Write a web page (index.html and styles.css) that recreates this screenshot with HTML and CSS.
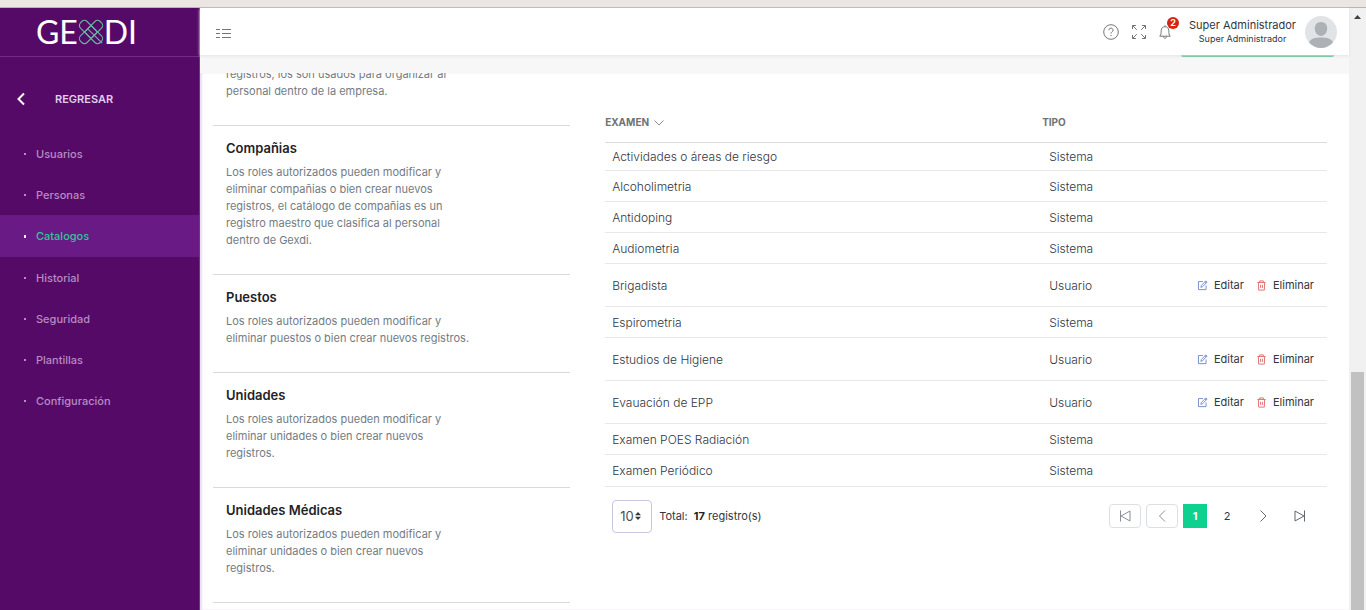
FILE: index.html
```html
<!DOCTYPE html>
<html lang="es">
<head>
<meta charset="utf-8">
<title>Gexdi - Catalogos</title>
<link rel="stylesheet" href="styles.css">
</head>
<body>
<svg width="0" height="0" class="defs" aria-hidden="true">
  <symbol id="i-edit" viewBox="0 0 12 12"><path d="M6.5 1.7H1.6v8.8h8.3V6M4.2 8l.5-2L9.6 1l1.4 1.3L6.1 7.3z M8.7 2l1.3 1.3"/></symbol>
  <symbol id="i-trash" viewBox="0 0 12 12"><path d="M1.5 2.7h9M4 2.5V1h4v1.5M2.6 2.9l.3 8.1h6.2l.3-8.1M5 5.2v3.4M7 5.2v3.4"/></symbol>
</svg>
<div class="strip"></div>
<div class="app">
  <aside class="sidebar">
    <div class="brand">
      <span>GE</span>
      <svg class="brand-x" viewBox="0 0 28 28" aria-hidden="true">
        <g transform="rotate(45 14 14)"><rect x="-1" y="9" width="30" height="10" rx="4"/></g>
        <g transform="rotate(-45 14 14)"><rect x="-1" y="9" width="30" height="10" rx="4"/></g>
        <path d="M10 10l16 16M14 7l7 7-7 7-7-7z"/>
      </svg>
      <span>DI</span>
    </div>
    <a class="back" href="#">
      <svg viewBox="0 0 10 14" aria-hidden="true"><path d="M8 1.500L2.500 7 8 12.500"/></svg>
      <span>REGRESAR</span>
    </a>
    <nav class="menu">
      <a href="#">Usuarios</a>
      <a href="#">Personas</a>
      <a href="#" class="active">Catalogos</a>
      <a href="#">Historial</a>
      <a href="#">Seguridad</a>
      <a href="#">Plantillas</a>
      <a href="#">Configuración</a>
    </nav>
  </aside>
  <main class="main">
    <header class="topbar">
      <button class="icon-btn toggle" aria-label="Menú"><svg width="15" height="11" viewBox="0 0 15 11"><path d="M0 1.500h4M6 1.500h9M0 5.500h4M6 5.500h9M0 9.500h4M6 9.500h9"/></svg></button>
      <div class="tools">
        <button class="icon-btn" aria-label="Ayuda"><svg width="16" height="16" viewBox="0 0 16 16"><circle cx="8" cy="8" r="7.300"/><path d="M5.900 6.200c0-2.800 4.200-2.700 4.200-.1 0 1.600-2.100 1.600-2.100 3.500M8 11v1.200"/></svg></button>
        <button class="icon-btn" aria-label="Pantalla completa"><svg width="14" height="14" viewBox="0 0 14 14"><path d="M.5 4V.5H4M.5.5l4.300 4.300M10 .5h3.500V4M13.500.5L9.200 4.800M.5 10v3.500H4M.5 13.500l4.300-4.300M13.500 10v3.500H10M13.500 13.500L9.200 9.200"/></svg></button>
        <button class="icon-btn bell" aria-label="Notificaciones"><svg width="12" height="14" viewBox="0 0 12 14"><path d="M6 .3v1.200M.7 11.200h10.600C9.800 9.800 9.900 8.500 9.800 5.500 9.700 3 8.200 1.700 6 1.700S2.300 3 2.200 5.500C2.100 8.500 2.200 9.800.7 11.200zM4.500 11.500c0 2.400 3 2.400 3 0"/></svg><span class="badge">2</span></button>
        <div class="user"><div class="user-name">Super Administrador</div><div class="user-role">Super Administrador</div></div>
        <svg class="avatar" viewBox="0 0 32 32" role="img" aria-label="Avatar"><circle cx="16" cy="16" r="16" fill="#e1e4e6"/><path d="M16 6c-4 0-6.200 2.800-6.200 6.500S12.500 20 16 20s6.200-3.800 6.200-7.500S20 6 16 6zM4 26.500C5.500 22.500 10 21.500 16 21.500s10.500 1 12 5C25 30 20.500 32 16 32S7 30 4 26.500z" fill="#acb1b6"/></svg>
      </div>
    </header>
    <div class="band"><div class="band-line"></div></div>
    <div class="content">
      <div class="catalogs">
        <section class="catalog"><p>registros, los son usados para organizar al personal dentro de la empresa.</p></section>
        <section class="catalog"><h2>Compañias</h2><p>Los roles autorizados pueden modificar y eliminar compañias o bien crear nuevos registros, el catálogo de compañias es un registro maestro que clasifica al personal dentro de Gexdi.</p></section>
        <section class="catalog"><h2>Puestos</h2><p>Los roles autorizados pueden modificar y eliminar puestos o bien crear nuevos registros.</p></section>
        <section class="catalog"><h2>Unidades</h2><p>Los roles autorizados pueden modificar y eliminar unidades o bien crear nuevos registros.</p></section>
        <section class="catalog"><h2>Unidades Médicas</h2><p>Los roles autorizados pueden modificar y eliminar unidades o bien crear nuevos registros.</p></section>
        <section class="catalog"></section>
      </div>
      <div class="exams">
        <table>
          <colgroup><col class="c-exam"><col class="c-type"><col></colgroup>
          <thead><tr><th>EXAMEN <svg width="10" height="6" viewBox="0 0 10 6" aria-hidden="true"><path d="M.5.5L5 5 9.500.5"/></svg></th><th>TIPO</th><th></th></tr></thead>
          <tbody>
            <tr><td>Actividades o áreas de riesgo</td><td>Sistema</td><td></td></tr>
            <tr><td>Alcoholimetria</td><td>Sistema</td><td></td></tr>
            <tr><td>Antidoping</td><td>Sistema</td><td></td></tr>
            <tr><td>Audiometria</td><td>Sistema</td><td></td></tr>
            <tr class="own"><td>Brigadista</td><td>Usuario</td><td><div class="actions"><button><svg class="edit"><use href="#i-edit"/></svg>Editar</button><button><svg class="trash"><use href="#i-trash"/></svg>Eliminar</button></div></td></tr>
            <tr><td>Espirometria</td><td>Sistema</td><td></td></tr>
            <tr class="own"><td>Estudios de Higiene</td><td>Usuario</td><td><div class="actions"><button><svg class="edit"><use href="#i-edit"/></svg>Editar</button><button><svg class="trash"><use href="#i-trash"/></svg>Eliminar</button></div></td></tr>
            <tr class="own"><td>Evauación de EPP</td><td>Usuario</td><td><div class="actions"><button><svg class="edit"><use href="#i-edit"/></svg>Editar</button><button><svg class="trash"><use href="#i-trash"/></svg>Eliminar</button></div></td></tr>
            <tr><td>Examen POES Radiación</td><td>Sistema</td><td></td></tr>
            <tr><td>Examen Periódico</td><td>Sistema</td><td></td></tr>
          </tbody>
        </table>
        <div class="footer">
          <div class="page-size">
            <select aria-label="Registros por página"><option>10</option></select>
            <svg width="6" height="8" viewBox="0 0 6 8" aria-hidden="true"><path d="M3 0l3 3.300H0zM3 8L0 4.700h6z"/></svg>
          </div>
          <div class="total">Total: &nbsp;<strong>17</strong> registro(s)</div>
          <nav class="pager" aria-label="Paginación">
            <button class="boxed" aria-label="Primera"><svg width="12" height="12" viewBox="0 0 12 12"><path d="M1.500.5v11M11 1v10L2 6z"/></svg></button>
            <button class="boxed" aria-label="Anterior"><svg width="12" height="12" viewBox="0 0 12 12"><path d="M9 .5L3.500 6 9 11.500"/></svg></button>
            <button class="current">1</button>
            <button class="page">2</button>
            <button aria-label="Siguiente"><svg width="12" height="12" viewBox="0 0 12 12"><path d="M3.500.5L9 6l-5.500 5.500"/></svg></button>
            <button aria-label="Última"><svg width="12" height="12" viewBox="0 0 12 12"><path d="M10.500.5v11M1 1v10l9-5z"/></svg></button>
          </nav>
        </div>
      </div>
    </div>
  </main>
  <div class="scrollbar"><svg width="7" height="4" viewBox="0 0 7 4" aria-hidden="true"><path d="M3.500 0L7 4H0z"/></svg><div class="thumb"></div></div>
</div>
</body>
</html>
```
FILE: styles.css
```css
* { box-sizing: border-box; }
body {
  margin: 0;
  height: 100vh;
  display: flex;
  flex-direction: column;
  overflow: hidden;
  font-family: Inter, "Liberation Sans", sans-serif;
  font-size: 12px;
  color: #32363e;
  background: #fff;
}
button {
  font: inherit;
  color: inherit;
  border: 0;
  padding: 0;
  background: none;
  display: flex;
  align-items: center;
  justify-content: center;
}
a { text-decoration: none; }
svg { fill: none; flex-shrink: 0; }
.defs { position: absolute; }

.strip { flex: 0 0 8px; background: #ebe6e2; border-bottom: 1px solid #b9b6b4; }
.app { flex: 1; min-height: 0; display: flex; }

.sidebar { flex: 0 0 200px; background: #560a67; border-right: 1px solid #75338a; }
.brand {
  height: 49px;
  display: flex;
  align-items: center;
  justify-content: center;
  padding-right: 26px;
  border-bottom: 1px solid #74298a;
  font-family: Lato, sans-serif;
  font-size: 32px;
  line-height: 48px;
  color: #fff;
}
.brand-x { width: 26px; height: 26px; stroke: #63b8a0; stroke-width: 1.2; }
.back {
  height: 40px;
  margin: 22px 0 14px;
  padding-left: 16px;
  display: flex;
  align-items: center;
  gap: 29px;
  color: #e3cdea;
  font-size: 11px;
  font-weight: 600;
}
.back svg { width: 10px; height: 14px; stroke: #fff; stroke-width: 2; }
.menu a {
  height: 41px;
  padding-left: 24px;
  display: flex;
  align-items: center;
  gap: 10px;
  font-size: 11px;
  font-weight: 500;
  color: #b78bc4;
}
.menu a::before { content: ""; width: 2px; height: 2px; background: #b78bc4; }
.menu .active { height: 42px; background: #6a1a84; color: #32c39a; }
.menu .active::before { background: #fff; height: 3px; }

.main { flex: 1; min-width: 0; display: flex; flex-direction: column; }
.topbar {
  flex: 0 0 47px;
  padding: 0 12px 0 16px;
  display: flex;
  align-items: center;
  justify-content: space-between;
  background: #fff;
  box-shadow: 0 1px 3px #e2e0e6;
  z-index: 1;
}
.icon-btn svg { stroke: #737579; }
.toggle { padding-top: 4px; }
.tools { display: flex; align-items: center; gap: 13px; }
.bell { position: relative; }
.badge {
  position: absolute;
  left: 8px;
  top: -8px;
  width: 12px;
  height: 12px;
  border-radius: 6px;
  background: #d9230f;
  color: #fff;
  font-size: 9px;
  font-weight: 700;
  line-height: 12px;
  text-align: center;
}
.user { margin-left: 5px; text-align: center; color: #32363e; }
.user-name { font-size: 11px; line-height: 14px; }
.user-role { font-size: 9px; line-height: 13px; }
.avatar { width: 32px; height: 32px; margin-left: -4px; }
.band { flex: 0 0 18px; padding: 0 15px; background: #f7f7f7; }
.band-line { width: 153px; height: 2px; margin-left: auto; background: #45b87a; border-radius: 0 0 2px 2px; }

.content {
  flex: 1;
  min-height: 0;
  overflow: hidden;
  padding: 0 22px 0 13px;
  display: grid;
  grid-template-columns: 331fr 669fr;
  column-gap: 35px;
  box-shadow: inset 2px 0 2px #eadff0;
}
.catalogs { margin-top: -7px; }
.catalog { padding: 0 13px 25px; }
.catalog + .catalog { padding-top: 12px; border-top: 1px solid #d9d9d9; }
.catalog h2 { margin: 0 0 6px; font-size: 13px; line-height: 20px; font-weight: 600; color: #1f2226; }
.catalog p { margin: 0; max-width: 246px; font-size: 11px; line-height: 17px; color: #747b83; }

.exams { padding-top: 30px; }
table { width: 100%; table-layout: fixed; border-collapse: collapse; }
.c-exam { width: 437px; }
.c-type { width: 120px; }
th {
  height: 39px;
  padding: 0;
  text-align: left;
  font-size: 10px;
  font-weight: 700;
  color: #6f7276;
  border-bottom: 1px solid #dcdcdc;
}
th svg { stroke: #8a8d92; margin-left: 3px; }
td { height: 31px; padding: 1px 7px 0; border-bottom: 1px solid #e8e8e8; font-weight: 300; }
tr:first-child td { height: 28px; padding-top: 0; }
tr:last-child td { height: 32px; }
tr.own td { height: 43px; }
.actions { display: flex; justify-content: flex-end; gap: 12px; padding-right: 6px; font-size: 11px; font-weight: 400; }
.actions button { gap: 6px; }
.actions svg { width: 11px; height: 11px; }
.edit { stroke: #7186cc; }
.trash { stroke: #e0696b; }

.footer { display: flex; align-items: center; gap: 7px; padding: 13px 11px 0 7px; font-size: 11px; }
.page-size { position: relative; width: 40px; height: 33px; }
.page-size select {
  appearance: none;
  width: 100%;
  height: 100%;
  padding: 0 0 0 7px;
  border: 1px solid #c9c7e6;
  border-radius: 4px;
  background: #fff;
  font: 13px Inter, sans-serif;
  color: #4a4e55;
}
.page-size svg { position: absolute; right: 11px; top: 12px; fill: #33363c; pointer-events: none; }
.total strong { font-weight: 700; color: #222; }
.pager { margin-left: auto; display: flex; gap: 5px; }
.pager button { width: 32px; height: 24px; }
.pager svg { stroke: #63676e; }
.pager .boxed { border: 1px solid #dcdfe3; border-radius: 4px; }
.pager .boxed svg { stroke: #8a8e96; }
.pager .current { width: 24px; background: #0fd18f; color: #fff; font-weight: 700; }
.pager .page { width: 30px; }

.scrollbar {
  flex: 0 0 17px;
  display: flex;
  flex-direction: column;
  align-items: center;
  padding-top: 7px;
  background: #f1f1f1;
}
.scrollbar svg { fill: #404040; }
.thumb { width: 13px; margin-top: auto; height: 40%; background: #c1c1c1; }
```
